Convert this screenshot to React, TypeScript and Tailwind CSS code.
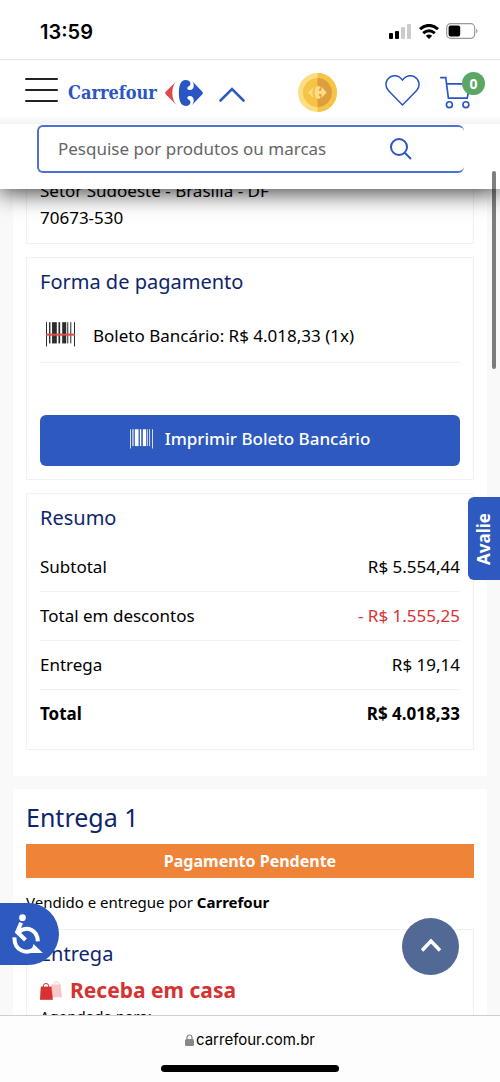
import { ReactNode } from "react";

const SUMMARY = [
  { label: "Subtotal", value: "R$ 5.554,44", discount: false },
  { label: "Total em descontos", value: "- R$ 1.555,25", discount: true },
  { label: "Entrega", value: "R$ 19,14", discount: false },
];

const BARS = [
  [0, 3, 72],
  [9, 4, 63],
  [18, 14, 63],
  [37, 5, 63],
  [48, 12, 63],
  [63, 3, 63],
  [72, 3, 63],
  [83, 3, 72],
];

const LogoMark = ({ className }: { className: string }) => (
  <svg viewBox="0 0 115 78" className={className} aria-hidden="true">
    <path
      className="fill-[#e0484c]"
      d="M35 3 L2 35 Q-1 39 2 43 L35 75 C27 66 22 55 22 39 S27 12 35 3Z"
    />
    <path
      className="fill-[#2a55c4]"
      d="M62 0 C47 0 42 18 42 39 S47 78 62 78 C71 78 77 74 77 67 C77 62 74 61 71 59 C65 55 67 48 75 48 C83 48 87 54 87 61 C87 67 85 71 82 75 L113 43 Q116 39 113 35 L82 3 C85 7 87 11 87 17 C87 24 83 30 75 30 C67 30 65 23 71 19 C74 17 77 16 77 11 C77 4 71 0 62 0Z"
    />
  </svg>
);

const Barcode = ({ className, scan }: { className: string; scan?: boolean }) => (
  <svg viewBox="0 0 86 73" className={className} aria-hidden="true">
    {BARS.map(([x, w, h]) => (
      <rect key={x} x={x} y="0" width={w} height={h} fill="currentColor" />
    ))}
    {scan && <rect x="0" y="34" width="86" height="6" fill="#d9504a" />}
  </svg>
);

const StatusBar = () => (
  <div className="relative z-20 flex h-[60px] shrink-0 items-center justify-between border-b border-[#e6e6e6] bg-white pr-[22px] pl-10">
    <span className="mt-1 font-['Inter'] text-[20px] font-semibold">13:59</span>
    <div className="mt-[3px] flex items-center gap-[7px]">
      <svg viewBox="0 0 23 16" className="h-4 w-[23px]" aria-hidden="true">
        <rect x="0" y="10" width="4" height="6" rx="1" />
        <rect x="6" y="8" width="4" height="8" rx="1" />
        <rect x="12" y="4" width="4" height="12" rx="1" fill="#ccc" />
        <rect x="18" y="1" width="4" height="15" rx="1" fill="#ccc" />
      </svg>
      <svg viewBox="0 0 20 15" className="h-[15px] w-5" fill="none" stroke="#000" strokeWidth="3" aria-hidden="true">
        <path d="M1 5.2 Q10 -2.4 19 5.2" />
        <path d="M4.2 9.2 Q10 4.4 15.8 9.2" />
        <path d="M10 15 L6.8 11.8 Q10 9.2 13.2 11.8Z" fill="#000" stroke="none" />
      </svg>
      <svg viewBox="0 0 32 16" className="h-4 w-8" aria-hidden="true">
        <rect x="0.7" y="0.7" width="28" height="14.6" rx="4" fill="none" stroke="#999" strokeWidth="1.2" />
        <rect x="2.6" y="2.6" width="11.6" height="10.8" rx="2" />
        <path d="M30.3 5.5 Q32.6 8 30.3 10.5Z" fill="#888" />
      </svg>
    </div>
  </div>
);

const Header = () => (
  <header className="relative z-10 shrink-0 bg-white shadow-[0_4px_22px_rgba(0,0,0,0.75)]">
    <div className="flex h-16 items-center bg-linear-to-b from-white from-85% to-[#f3f3f3] pr-[15px] pl-[25px]">
      <button type="button" aria-label="Menu" className="-mt-1 flex w-[33px] flex-col gap-[9px]">
        <span className="h-[2px] rounded-sm bg-[#222]" />
        <span className="h-[2px] rounded-sm bg-[#222]" />
        <span className="h-[2px] rounded-sm bg-[#222]" />
      </button>
      <a href="#inicio" className="ml-[10px] flex items-center gap-2">
        <span className="font-['DejaVu_Serif_Condensed','DejaVu_Serif',serif] text-[18px] font-bold text-[#2a55c4]">
          Carrefour
        </span>
        <LogoMark className="mt-px h-[26px] w-[38px]" />
      </a>
      <button type="button" aria-label="Recolher" className="mt-1 ml-4">
        <svg viewBox="0 0 26 15" className="h-[15px] w-[26px]" fill="none" stroke="#2f5bbf" strokeWidth="2.6" strokeLinecap="round" aria-hidden="true">
          <path d="M1.5 13.5 L13 2 L24.5 13.5" />
        </svg>
      </button>
      <button type="button" aria-label="Moedas" className="mr-12 ml-auto">
        <svg viewBox="0 0 116 116" className="size-[39px]" aria-hidden="true">
          <circle cx="58" cy="58" r="58" fill="#fbdd83" />
          <path d="M58 0a58 58 0 0 1 0 116Z" fill="#f6c344" />
          <circle cx="58" cy="58" r="43" fill="#f6c344" />
          <path d="M58 15a43 43 0 0 1 0 86Z" fill="#dd9e3f" />
          <g fill="#fbdd83" transform="translate(30 39) scale(.48)">
            <path d="M35 3 L0 39 L35 75 C24 55 24 23 35 3Z" />
            <path d="M64 0 C47 0 42 18 42 39 S47 78 64 78 C72 78 77 73 77 67 C64 58 66 48 75 48 C82 48 86 54 82 75 L115 39 L82 3 C86 24 82 30 75 30 C66 30 64 20 77 11 C77 5 72 0 64 0Z" />
          </g>
        </svg>
      </button>
      <button type="button" aria-label="Favoritos" className="-mt-1">
        <svg viewBox="0 0 104 92" className="h-[31px] w-[35px]" fill="none" stroke="#2a55c4" strokeWidth="4.5" aria-hidden="true">
          <path d="M52 89 L10 46 C-2 32 2 14 15 6 C28 -1 42 2 52 15 C62 2 76 -1 89 6 C102 14 106 32 94 46Z" />
        </svg>
      </button>
      <button type="button" aria-label="Carrinho" className="relative ml-5 w-[45px]">
        <svg viewBox="0 0 90 100" className="h-[33px] w-[30px]" fill="none" stroke="#2a55c4" strokeWidth="5" aria-hidden="true">
          <path d="M0 5 H17 L25 67 H82 L90 24 H20" />
          <circle cx="28" cy="87" r="9" />
          <circle cx="78" cy="87" r="9" />
        </svg>
        <span className="absolute -top-1 right-0 flex size-[23px] items-center justify-center rounded-full bg-[#5aa763] text-[14px] font-bold text-white">
          0
        </span>
      </button>
    </div>
    <form className="px-9 pt-px pb-4">
      <div className="ml-px flex h-12 items-center rounded-md border-2 border-r-0 border-[#4a73cf] pr-[52px] pl-[19px]">
        <input
          type="search"
          aria-label="Pesquisar"
          placeholder="Pesquise por produtos ou marcas"
          className="min-w-0 flex-1 bg-transparent text-[17px] outline-none placeholder:text-[#666]"
        />
        <button type="button" aria-label="Buscar">
          <svg viewBox="0 0 22 22" className="size-[22px]" fill="none" stroke="#2a55c4" strokeWidth="2" aria-hidden="true">
            <circle cx="9" cy="9" r="8" />
            <path d="M14.5 14.5 L21 21" />
          </svg>
        </button>
      </div>
    </form>
  </header>
);

const Card = ({ children, className = "" }: { children: ReactNode; className?: string }) => (
  <section className={`border border-[#f1f1f1] px-[13px] ${className}`}>{children}</section>
);

const Payment = () => (
  <Card className="pt-2 pb-[13px]">
    <h2 className="text-[20px] leading-8 text-[#0e256b]">Forma de pagamento</h2>
    <div className="flex items-center gap-[18px] border-b border-[#f1f1f1] pt-6 pb-[13px] pl-[6px]">
      <Barcode scan className="-mt-[3px] h-[25px] w-[29px] text-[#2d2d2d]" />
      <span className="text-[17px] leading-[27px]">Boleto Bancário: R$ 4.018,33 (1x)</span>
    </div>
    <button
      type="button"
      className="mt-[52px] flex h-[51px] w-full items-center justify-center gap-3 rounded-md bg-[#2e59bf] pb-[3px] text-[17px] font-medium text-white"
    >
      <Barcode className="h-5 w-[23px]" />
      Imprimir Boleto Bancário
    </button>
  </Card>
);

const Summary = () => (
  <Card className="pt-2 pb-[11px]">
    <h2 className="text-[20px] leading-8 text-[#0e256b]">Resumo</h2>
    <table className="mt-2 w-full text-[17px]">
      <tbody>
        {SUMMARY.map((row) => (
          <tr key={row.label} className="h-[49px] border-b border-[#f1f1f1]">
            <th scope="row" className="text-left font-normal">
              {row.label}
            </th>
            <td className={row.discount ? "text-right text-[#d63232]" : "text-right"}>{row.value}</td>
          </tr>
        ))}
        <tr className="h-[49px] font-bold">
          <th scope="row" className="text-left">
            Total
          </th>
          <td className="text-right">R$ 4.018,33</td>
        </tr>
      </tbody>
    </table>
  </Card>
);

const Delivery = () => (
  <div className="mt-[13px] bg-white px-[13px] pt-2">
    <h1 className="text-[25px] leading-10 text-[#0e256b]">Entrega 1</h1>
    <p className="mt-[7px] flex h-[34px] items-center justify-center bg-[#ef8337] text-[16px] font-bold text-white">
      Pagamento Pendente
    </p>
    <p className="mt-3 text-[15px] leading-6">
      Vendido e entregue por <strong>Carrefour</strong>
    </p>
    <Card className="mt-[15px] h-40 pt-2">
      <h2 className="text-[20px] leading-8 text-[#0e256b]">Entrega</h2>
      <p className="mt-1 flex items-center gap-2 text-[21px] leading-8 font-bold text-[#d63232]">
        <svg viewBox="0 0 66 56" className="h-[19px] w-[22px]" aria-hidden="true">
          <g fill="#f7c9ca" stroke="#f7c9ca">
            <path d="M34 10 H62 L66 48 H34Z" stroke="none" />
            <path d="M42 12 V9 a8 7 0 0 1 16 0 V12" fill="none" strokeWidth="3" />
          </g>
          <path d="M3 17 H34 L38 56 H0Z" fill="#d63232" stroke="#d63232" strokeLinejoin="round" />
          <path d="M10 19 V14 a8 7 0 0 1 16 0 V19" fill="none" stroke="#d63232" strokeWidth="3" />
        </svg>
        Receba em casa
      </p>
      <p className="text-[15px] leading-5">Agendada para:</p>
    </Card>
  </div>
);

const BrowserBar = () => (
  <footer className="relative z-10 flex h-[67px] shrink-0 flex-col items-center justify-between border-t border-[#cfcfcf] bg-[#fdfdfd] pt-3 pb-[10px]">
    <div className="flex items-center gap-[2px] font-['Inter'] text-[15px] leading-6">
      <svg viewBox="0 0 9 12" className="h-3 w-[9px]" aria-hidden="true">
        <rect x="0" y="5" width="9" height="7" rx="1.5" fill="#88888c" />
        <path d="M2 6 V3.5 a2.5 2.5 0 0 1 5 0 V6" fill="none" stroke="#88888c" strokeWidth="1.2" />
      </svg>
      carrefour.com.br
    </div>
    <div className="h-[7px] w-[178px] rounded-full bg-black" />
  </footer>
);

export default function App() {
  return (
    <div className="relative flex h-screen flex-col overflow-hidden bg-white font-['Noto_Sans',sans-serif] text-black">
      <StatusBar />
      <Header />
      <main className="min-h-0 flex-1 overflow-hidden bg-[#f9f9f9] px-[13px]">
        <div className="-mt-3 bg-white px-[13px] pb-[26px]">
          <Card className="border-t-0 pb-3">
            <p className="text-[17px] leading-[27px]">
              Setor Sudoeste - Brasilia - DF
              <br />
              70673-530
            </p>
          </Card>
          <div className="mt-[13px] flex flex-col gap-[13px]">
            <Payment />
            <Summary />
          </div>
        </div>
        <Delivery />
      </main>
      <BrowserBar />

      <div className="absolute top-[171px] right-1 z-20 h-[198px] w-1 rounded-full bg-black/50" />
      <button
        type="button"
        className="absolute top-[497px] right-0 flex h-[83px] w-8 items-center justify-center rounded-l-md bg-[#2e59bf] text-[17px] font-bold text-white"
      >
        <span className="rotate-180 [writing-mode:vertical-rl]">Avalie</span>
      </button>
      <button
        type="button"
        aria-label="Acessibilidade"
        className="absolute bottom-[117px] left-0 flex h-[62px] w-[59px] items-center rounded-r-full bg-[#2e59bf] pl-3"
      >
        <svg viewBox="0 0 92 120" className="h-10 w-[31px]" fill="none" stroke="#fff" strokeWidth="12" aria-hidden="true">
          <circle cx="31" cy="11" r="10" fill="#fff" stroke="none" />
          <path d="M27 26 L15 54 L40 78" />
          <path d="M20 54 C44 34 76 48 77 82" />
          <path d="M7 70 C5 108 42 124 68 104" />
          <path d="M64 90 L92 117 H56Z" fill="#fff" stroke="none" />
        </svg>
      </button>
      <button
        type="button"
        aria-label="Voltar ao topo"
        className="absolute right-[41px] bottom-[107px] flex size-[57px] items-center justify-center rounded-full bg-[#536995] pb-1"
      >
        <svg viewBox="0 0 20 14" className="h-[14px] w-5" fill="none" stroke="#fff" strokeWidth="3.6" aria-hidden="true">
          <path d="M1 12.5 L10 3 L19 12.5" />
        </svg>
      </button>
    </div>
  );
}
